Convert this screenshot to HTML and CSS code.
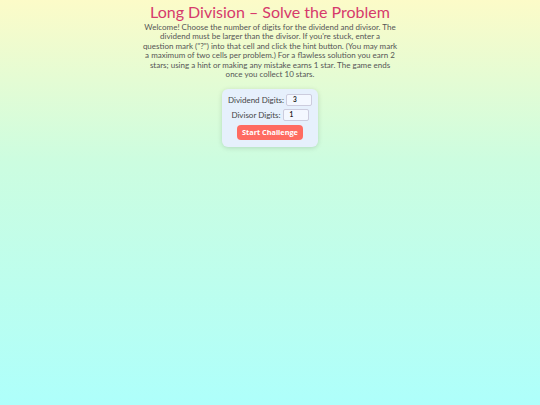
FILE: index.html
```html
<!DOCTYPE html>
<html>
<head>
<meta charset="utf-8">
<link rel="stylesheet" href="styles.css">
</head>
<body>
<div class="page">
  <h1 class="title">Long Division – Solve the Problem</h1>
  <p class="intro">Welcome! Choose the number of digits for the dividend and divisor. The<br>dividend must be larger than the divisor. If you're stuck, enter a<br>question mark ("?") into that cell and click the hint button. (You may mark<br>a maximum of two cells per problem.) For a flawless solution you earn 2<br>stars; using a hint or making any mistake earns 1 star. The game ends<br>once you collect 10 stars.</p>
  <div class="card">
    <div class="row"><label>Dividend Digits:</label><span class="input">3</span></div>
    <div class="row"><label>Divisor Digits:</label><span class="input">1</span></div>
    <button class="btn">Start Challenge</button>
  </div>
</div>
</body>
</html>
```

FILE: styles.css
```css
html, body { margin: 0; height: 100%; }
body {
  background: linear-gradient(to bottom, #fcfbc8 0%, #ccfde0 40%, #aefffb 100%);
  font-family: "Lato", "DejaVu Sans", sans-serif;
  color: #555;
}
.page {
  display: flex;
  flex-direction: column;
  align-items: center;
  padding-top: 2px;
}
.title {
  margin: 0;
  font-size: 16px;
  font-weight: 400;
  color: #d63a6c;
  line-height: 20px;
}
.intro {
  margin: 1px 0 0;
  white-space: nowrap;
  text-align: center;
  font-size: 8px;
  line-height: 9.4px;
  color: #555;
}
.card {
  margin-top: 10px;
  background: #e6f0fc;
  border-radius: 6px;
  box-shadow: 0 1px 5px rgba(0,0,0,0.15);
  padding: 5px 6px 7px;
  display: flex;
  flex-direction: column;
  align-items: center;
  gap: 3px;
}
.row {
  display: flex;
  align-items: center;
  gap: 2px;
  font-size: 8px;
  color: #444;
}
.input {
  width: 18px;
  height: 10px;
  border: 1px solid #ccd;
  border-radius: 2px;
  background: #f4f8ff;
  font-size: 6.5px;
  line-height: 10px;
  padding-left: 6px;
  color: #222;
  font-weight: bold;
}
.btn {
  margin-top: 1px;
  background: #ff6b61;
  color: #fff;
  border: none;
  border-radius: 4px;
  font-family: "Open Sans", sans-serif;
  font-weight: bold;
  font-size: 7.3px;
  line-height: 9px;
  padding: 3px 0;
  width: 66px;
  white-space: nowrap;
}
```
